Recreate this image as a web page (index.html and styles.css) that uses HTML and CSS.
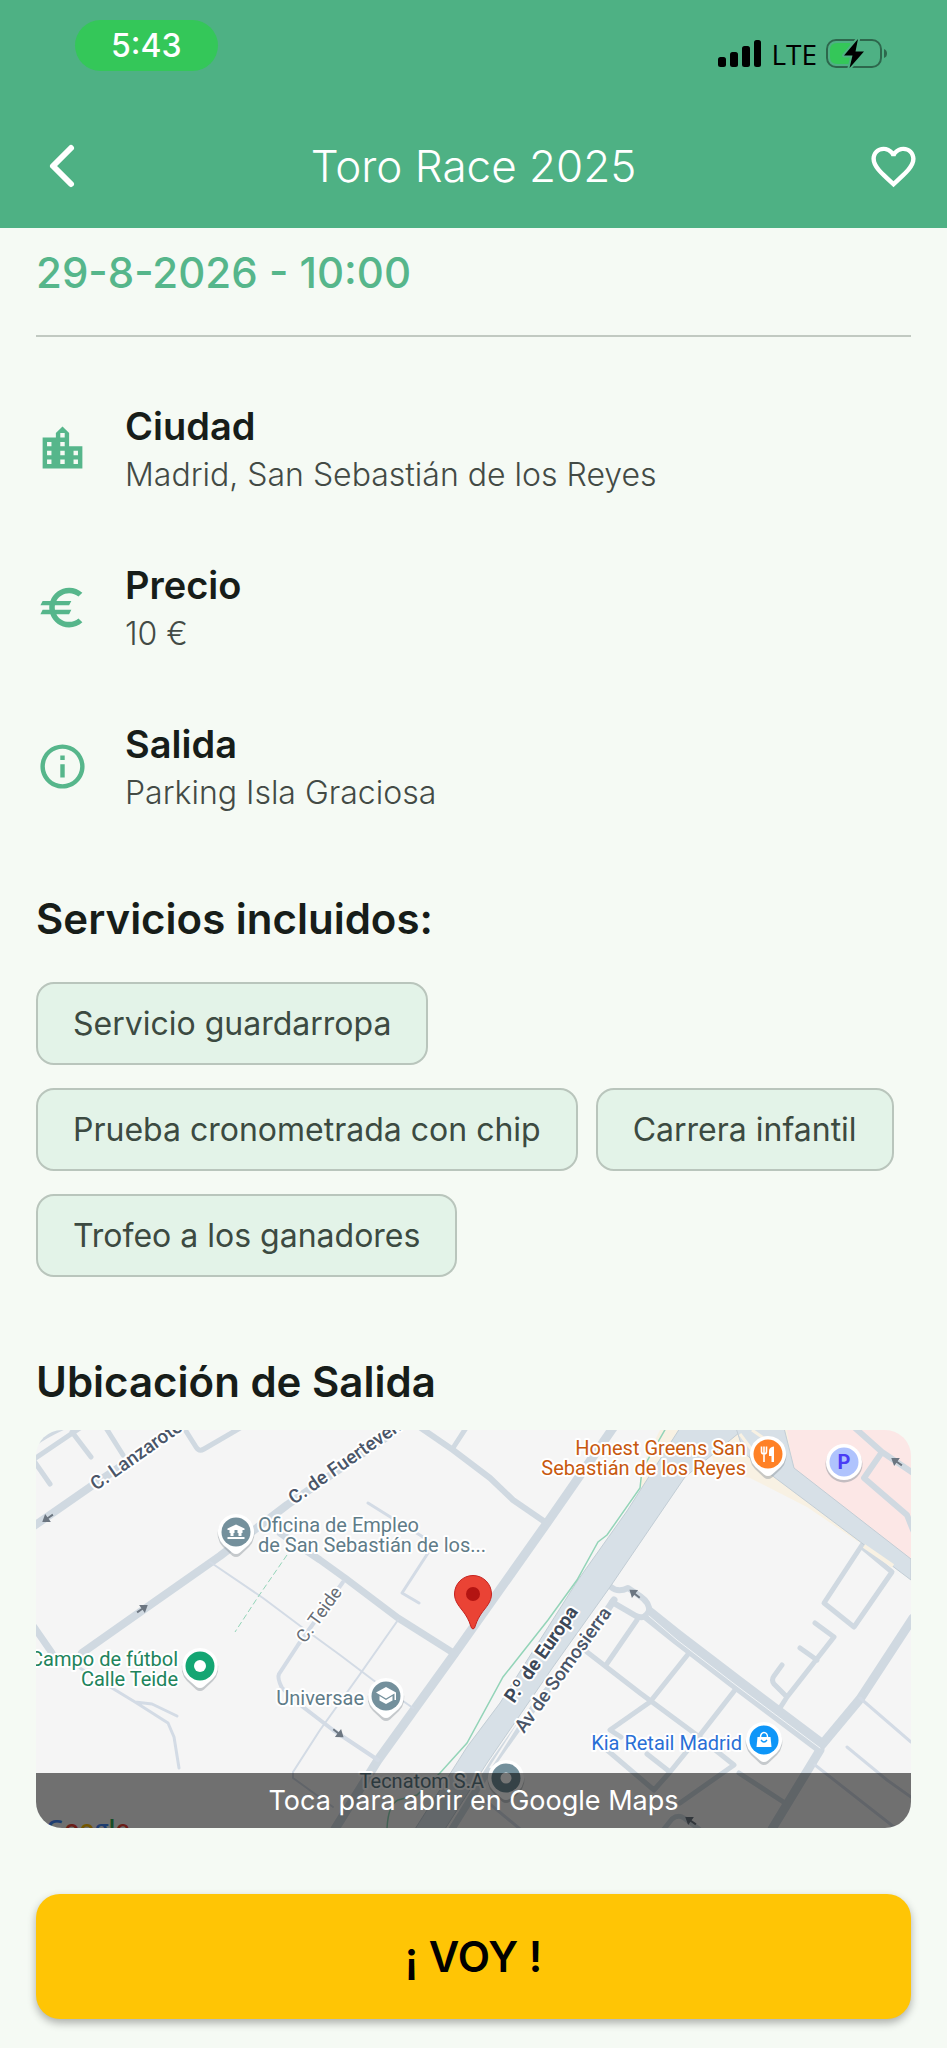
FILE: index.html
```html
<!DOCTYPE html>
<html lang="es">
<head>
<meta charset="utf-8">
<meta name="viewport" content="width=device-width, initial-scale=1">
<title>Toro Race 2025</title>
<link rel="stylesheet" href="styles.css">
</head>
<body>
<header class="top">
  <div class="status">
    <span class="clock">5:43</span>
    <div class="status-icons">
      <svg width="44" height="28" viewBox="0 0 44 28" aria-hidden="true"><rect x="0" y="17" width="8" height="10" rx="2.5"/><rect x="12" y="12" width="8" height="15" rx="2.5"/><rect x="24" y="6" width="8" height="21" rx="2.5"/><rect x="36" y="0" width="7" height="27" rx="2.5"/></svg>
      <span class="network">LTE</span>
      <svg width="62" height="32" viewBox="0 0 62 32" aria-hidden="true">
        <rect x="1" y="2" width="54" height="27" rx="9" fill="none" stroke="#000" stroke-opacity=".42" stroke-width="2"/>
        <path d="M58 11q3 1 3 4.500t-3 4.500z" fill="#000" fill-opacity=".42"/>
        <path d="M11 5h13v21H11q-7 0-7-7v-7q0-7 7-7z" fill="#34c759"/>
        <path d="M32 1L18 17.500h8.500L23.500 30 38 13.500H29.500z" fill="#000" stroke="#4eb184" stroke-width="4" paint-order="stroke" stroke-linejoin="round"/>
      </svg>
    </div>
  </div>
  <nav class="bar">
    <button class="icon-btn" type="button" aria-label="Volver"><svg width="53" height="53" viewBox="0 0 53 53"><path d="M44 8L26 26l18 18" fill="none" stroke="#fff" stroke-width="6" stroke-linecap="round" stroke-linejoin="round"/></svg></button>
    <h1>Toro Race 2025</h1>
    <button class="icon-btn" type="button" aria-label="Favorito"><svg width="53" height="53" viewBox="0 0 24 24" fill="#fff"><path d="M16.500 3c-1.740 0-3.410.810-4.500 2.090C10.910 3.810 9.240 3 7.500 3 4.420 3 2 5.420 2 8.500c0 3.780 3.400 6.860 8.550 11.540L12 21.350l1.450-1.320C18.600 15.360 22 12.280 22 8.500 22 5.420 19.580 3 16.500 3zm-4.400 15.550l-.1.100-.1-.1C7.140 14.240 4 11.390 4 8.500 4 6.500 5.500 5 7.500 5c1.540 0 3.040.990 3.570 2.360h1.870C13.460 5.990 14.960 5 16.500 5c2 0 3.500 1.500 3.500 3.500 0 2.890-3.140 5.740-7.900 10.050z"/></svg></button>
  </nav>
</header>

<main class="content">
  <p class="date">29-8-2026 - 10:00</p>
  <ul class="facts">
    <li class="fact">
      <svg class="fact-icon" viewBox="0 0 24 24" aria-hidden="true"><path d="M15 11V5l-3-3-3 3v2H3v14h18V11h-6zm-8 8H5v-2h2v2zm0-4H5v-2h2v2zm0-4H5V9h2v2zm6 8h-2v-2h2v2zm0-4h-2v-2h2v2zm0-4h-2V9h2v2zm0-4h-2V5h2v2zm6 12h-2v-2h2v2zm0-4h-2v-2h2v2z"/></svg>
      <div><h2>Ciudad</h2><p>Madrid, San Sebastián de los Reyes</p></div>
    </li>
    <li class="fact">
      <svg class="fact-icon" viewBox="0 0 24 24" aria-hidden="true"><path d="M15 18.500c-2.510 0-4.680-1.420-5.760-3.500H15l1-2H8.580c-.05-.33-.08-.66-.08-1s.03-.67.080-1H15l1-2H9.240C10.320 6.920 12.500 5.500 15 5.500c1.610 0 3.090.590 4.230 1.570L21 5.300C19.410 3.870 17.300 3 15 3c-3.920 0-7.240 2.510-8.480 6H3l-1 2h4.060c-.04.330-.06.660-.06 1s.02.670.060 1H3l-1 2h4.520c1.240 3.490 4.560 6 8.480 6 2.310 0 4.410-.870 6-2.300l-1.780-1.770c-1.130.980-2.600 1.570-4.220 1.570z"/></svg>
      <div><h2>Precio</h2><p>10 €</p></div>
    </li>
    <li class="fact">
      <svg class="fact-icon" viewBox="0 0 24 24" aria-hidden="true"><path d="M11 7h2v2h-2zm0 4h2v6h-2zm1-9C6.480 2 2 6.480 2 12s4.480 10 10 10 10-4.480 10-10S17.520 2 12 2zm0 18c-4.410 0-8-3.590-8-8s3.590-8 8-8 8 3.590 8 8-3.590 8-8 8z"/></svg>
      <div><h2>Salida</h2><p>Parking Isla Graciosa</p></div>
    </li>
  </ul>

  <section class="services">
    <h2 class="section-title">Servicios incluidos:</h2>
    <ul class="chips">
      <li>Servicio guardarropa</li>
      <li>Prueba cronometrada con chip</li>
      <li>Carrera infantil</li>
      <li>Trofeo a los ganadores</li>
    </ul>
  </section>

  <section class="place">
    <h2 class="section-title">Ubicación de Salida</h2>
    <a class="map" href="#mapa">
      <svg class="map-art" viewBox="36 1430 875 398" role="img" aria-label="Mapa del punto de salida">
        <defs>
          <g id="pin"><path d="M0-18.500a18.500 18.500 0 0 1 13 31.500L4 21.500q-4 3-8 0L-13 13A18.500 18.500 0 0 1 0-18.500z" fill="#8b949b" opacity=".45" transform="translate(0 2)"/><path d="M0-18a18 18 0 0 1 12.500 31L4 20.500q-4 3-8 0L-12.500 13A18 18 0 0 1 0-18z" fill="#fff"/></g>
          <path id="arrow" d="M-6-1H0V-5L7 0 0 5V1H-6z" fill="#6c7681"/>
        </defs>
        <rect x="36" y="1430" width="875" height="398" fill="#f5f5f5"/>
        <path d="M618 1430H682L640 1490V1470L660 1430zM707 1430H790L794 1468 860 1543 807 1507 750 1478 715 1470z" fill="#f8f1e3"/>
        <path d="M787 1430H911V1560L793 1468z" fill="#fce7e6"/>

        <g fill="none" stroke="#d0d9e1" stroke-linecap="round" stroke-linejoin="round">
          <g stroke-width="9">
            <path d="M613 1428L547 1523 455 1653 378 1760 335 1829"/>
            <path d="M82 1653L153 1603 220 1556 287 1505 400 1428" stroke-width="8"/>
            <path d="M34 1526L93 1485 175 1430" stroke-width="8"/>
            <path d="M913 1618L860 1699 820 1747V1750L772 1829"/>
          </g>
          <g stroke-width="7">
            <path d="M280 1533L320 1560 345 1578 398 1618 455 1654"/>
            <path d="M421 1428L453 1450 490 1478 513 1500 545 1522" stroke-width="6"/>
            <path d="M34 1627L52 1653"/>
            <path d="M452 1829L493 1763 520 1725 587 1640 614 1600"/>
            <path d="M611 1587Q618 1593 628 1588L640 1596Q650 1603 649 1611 645 1620 636 1616L612 1602" stroke-width="6"/>
          </g>
          <g stroke-width="5">
            <path d="M34 1444Q45 1436 62 1428M34 1459L80 1428M72 1432L91 1457M106 1428L123 1455M34 1461L50 1484M184 1428L196 1447Q199 1452 204 1449L240 1428M453 1448L466 1428"/>
            <path d="M855 1428L882 1452 913 1473M882 1452L864 1478 907 1515 913 1530" stroke-width="6"/>
            <path d="M862 1545L824 1603 854 1627 892 1572 862 1547"/>
            <path d="M815 1623L834 1637 787 1697 780 1708M800 1648L817 1660M787 1697L774 1684Q771 1680 774 1676L782 1665"/>
            <path d="M689 1653L650 1702 610 1730 621 1737M587 1652L640 1693 694 1733 734 1765 680 1803M735 1690L700 1735 670 1772 654 1790 607 1750M670 1772L647 1754M606 1665L637 1620"/>
            <path d="M739 1773L785 1803M664 1829L672 1819Q678 1814 684 1818L699 1829"/>
          </g>
          <g stroke-width="3" stroke="#d3dbe5">
            <path d="M80 1668L112 1688 135 1702 168 1723 174 1737 179 1768M135 1702L152 1704 177 1716"/>
            <path d="M343 1582L298 1645 279 1674Q277 1678 282 1688L303 1707 333 1730 378 1760" stroke-width="4"/>
            <path d="M368 1503L392 1518 428 1540 428 1553 402 1593 419 1603"/>
            <path d="M210 1562L263 1598 303 1628 340 1655 373 1680 413 1708" stroke-width="2"/>
            <path d="M398 1620L358 1677 320 1730 293 1772V1778L333 1807" stroke-width="2"/>
            <path d="M860 1698L911 1742M847 1747L887 1780 911 1797M815 1765L894 1827M485 1800L520 1829"/>
          </g>
          <path d="M647 1613L677 1637 737 1683 822 1747" stroke-width="15" stroke-linecap="butt"/>
          <path d="M649 1616L677 1640 737 1686 820 1748" stroke="#f2f5f7" stroke-width="1"/>
        </g>
        <path d="M680 1428L627 1511 578 1580 500 1703 467 1747 415 1829H445L487 1763 553 1667 610 1587 627 1562 685 1477 745 1428z" fill="#d7e0e7" stroke="#c2cdd5"/>
        <path d="M736 1428L744 1453 774 1477 911 1580V1559L794 1468 784 1428z" fill="#d7e0e7" stroke="#c2cdd5"/>
        <path d="M740 1434L752 1450M752 1430L772 1444 784 1446" stroke="#f8f1e3" stroke-width="3" fill="none"/>
        <path d="M864 1546L893 1566" stroke="#f8f1e3" stroke-width="4"/>
        <path d="M666 1428L642 1470 640 1488 607 1535 598 1542 577 1580 548 1620 503 1677 467 1743 440 1773 417 1795 398 1800Q388 1805 387 1829" fill="none" stroke="#93d4b8" stroke-width="1.500"/>
        <path d="M287 1555L258 1597 235 1632" fill="none" stroke="#93d4b8" stroke-dasharray="6 3"/>
        <path d="M490 1768L530 1705" stroke="#f5f5f5" stroke-width="2"/>

        <use href="#arrow" transform="translate(48 1518) rotate(145)"/>
        <use href="#arrow" transform="translate(142 1609) rotate(-35)"/>
        <use href="#arrow" transform="translate(338 1733) rotate(38)"/>
        <use href="#arrow" transform="translate(635 1594) rotate(218)"/>
        <use href="#arrow" transform="translate(897 1462) rotate(215)"/>
        <use href="#arrow" transform="translate(691 1821) rotate(215)"/>

        <g class="street">
          <text transform="translate(96 1491) rotate(-35)">C. Lanzarote</text>
          <text transform="translate(294 1505) rotate(-35)">C. de Fuerteventura</text>
          <text class="minor" transform="translate(305 1644) rotate(-54)">C. Teide</text>
          <text class="major" transform="translate(514 1704) rotate(-55)">P.º de Europa</text>
          <text transform="translate(524 1734) rotate(-54)">Av de Somosierra</text>
        </g>

        <g class="poi">
          <g fill="#5f7c88">
            <text x="258" y="1532">Oficina de Empleo</text>
            <text x="258" y="1552">de San Sebastián de los...</text>
            <text x="364" y="1705" text-anchor="end">Universae</text>
            <text x="484" y="1788" text-anchor="end">Tecnatom S.A</text>
          </g>
          <g fill="#21845c" text-anchor="end">
            <text x="178" y="1666">Campo de fútbol</text>
            <text x="178" y="1686">Calle Teide</text>
          </g>
          <g fill="#c8590f" text-anchor="end">
            <text x="746" y="1455">Honest Greens San</text>
            <text x="746" y="1475">Sebastián de los Reyes</text>
          </g>
          <text x="742" y="1750" text-anchor="end" fill="#2a6fd6">Kia Retail Madrid</text>
        </g>

        <g transform="translate(236 1532)"><use href="#pin"/><circle r="14.500" fill="#74909c"/><path d="M-8.500-3.500L0-7.500 8.500-3.500V-2H-8.500zM-6.500-2h5v3h-1v3h-3V1h-1zM1.500-2h5v3h-1v3h-3V1h-1zM-8.500 5h17v2h-17z" fill="#fff"/></g>
        <g transform="translate(200 1666)"><use href="#pin"/><circle r="14.500" fill="#14a673"/><circle r="6" fill="#fff"/></g>
        <g transform="translate(386 1696)"><use href="#pin"/><circle r="14.500" fill="#74909c"/><path d="M0-9L10-3.500V4H8.500V-2.500L0 2.500-10-3.500zM-6.500 0L0 4 6.500 0V4.500L0 8-6.500 4.500z" fill="#fff"/></g>
        <g transform="translate(506 1778)"><use href="#pin"/><circle r="14.500" fill="#74909c"/><circle r="5.500" fill="#fff"/></g>
        <g transform="translate(764 1740)"><use href="#pin"/><circle r="14.500" fill="#0e96f8"/><path d="M-6.500-3h13l1 10h-15z" fill="#fff"/><path d="M-3.500-3a3.500 4.500 0 0 1 7 0" fill="none" stroke="#fff" stroke-width="1.500"/><path d="M-3 0q3 4 6 0" fill="none" stroke="#0e96f8" stroke-width="1.300"/></g>
        <g transform="translate(768 1454)"><use href="#pin"/><circle r="14.500" fill="#ff8126"/><path d="M-6.500-7.500v5q0 2.500 2.500 2.500t2.500-2.500v-5M-4-7.500V8" fill="none" stroke="#fff" stroke-width="1.600"/><path d="M1 2v-5q0-4 5-4.500V8H3.500V2z" fill="#fff"/></g>
        <g transform="translate(844 1462)"><circle cy="2" r="18.500" fill="#8b949b" opacity=".5"/><circle r="18" fill="#fff"/><circle r="14.500" fill="#afc3fd"/><text class="parking" y="7" text-anchor="middle">P</text></g>
        <g transform="translate(473 1594)"><path d="M0-18.500A18.500 18.500 0 0 1 18.500 0C18.500 8 13 13 8 20 4 26 3 30 1.500 34q-1.500 2-3 0C-3 30-4 26-8 20-13 13-18.500 8-18.500 0A18.500 18.500 0 0 1 0-18.500z" fill="#ea4335" stroke="#c5221f"/><circle r="7" fill="#b31412"/></g>
        <text class="brand" x="46" y="1838"><tspan fill="#4285f4">G</tspan><tspan fill="#ea4335">o</tspan><tspan fill="#fbbc04">o</tspan><tspan fill="#4285f4">g</tspan><tspan fill="#34a853">l</tspan><tspan fill="#ea4335">e</tspan></text>
      </svg>
      <span class="map-hint">Toca para abrir en Google Maps</span>
    </a>
  </section>

  <button class="go" type="button">¡ VOY !</button>
</main>
</body>
</html>
```
FILE: styles.css
```css
* { box-sizing: border-box; }

body {
  margin: 0;
  background: #f5faf4;
  color: #171d19;
  font-family: Inter, "Liberation Sans", sans-serif;
}

h1, h2, p, ul { margin: 0; padding: 0; }
ul { list-style: none; }
button { border: 0; font: inherit; cursor: pointer; }
svg { display: block; }

.top { background: #4eb184; color: #fff; }

.status {
  display: flex;
  justify-content: space-between;
  align-items: flex-start;
  padding: 20px 59px 0 75px;
}

.clock {
  padding: 0 36px;
  border-radius: 26px;
  background: #34c759;
  font-size: 32px;
  font-weight: 500;
  line-height: 51px;
}

.status-icons {
  display: flex;
  align-items: center;
  gap: 9px;
  padding-top: 16px;
  color: #000;
}

.network {
  font-family: "Open Sans", sans-serif;
  font-size: 28px;
  font-weight: 500;
  line-height: 36px;
}

.bar {
  display: flex;
  justify-content: space-between;
  align-items: center;
  padding: 44px 27px 12px;
}

.bar h1 {
  font-size: 44px;
  font-weight: 300;
  line-height: 100px;
}

.icon-btn { padding: 0; background: none; }

.content { padding: 0 36px 28px; }

.date {
  padding: 16px 0 33px;
  border-bottom: 2px solid #c1c9c1;
  color: #56b68b;
  font-size: 42px;
  font-weight: 500;
  line-height: 58px;
}

.facts { padding: 60px 0 73px; }

.fact {
  display: flex;
  align-items: center;
  gap: 36px;
  height: 103px;
  margin-bottom: 56px;
}

.fact:last-child { margin-bottom: 0; }
.fact-icon { width: 53px; height: 53px; fill: #56b68b; }

.fact h2 {
  font-size: 38px;
  font-weight: 600;
  line-height: 52px;
}

.fact p {
  color: #434a45;
  font-size: 32px;
  font-weight: 300;
  line-height: 46px;
}

.section-title {
  font-size: 42px;
  font-weight: 600;
  line-height: 56px;
}

.chips {
  display: flex;
  flex-wrap: wrap;
  gap: 23px 18px;
  padding: 35px 0 77px;
}

.chips li {
  padding: 0 35px;
  border: 2px solid #b9c5bc;
  border-radius: 18px;
  background: #e3f3e8;
  color: #3c4a41;
  font-size: 32px;
  line-height: 79px;
}

.map {
  position: relative;
  display: block;
  overflow: hidden;
  margin: 20px 0 66px;
  border-radius: 26px;
  color: #fff;
  text-decoration: none;
}

.map-art { width: 100%; height: auto; font-family: Roboto, sans-serif; }

.map-hint {
  position: absolute;
  right: 0;
  bottom: 0;
  left: 0;
  background: rgba(0, 0, 0, 0.54);
  font-size: 27px;
  font-weight: 400;
  line-height: 55px;
  text-align: center;
}

.street text, .poi text {
  stroke: #fff;
  stroke-width: 4px;
  stroke-linejoin: round;
  paint-order: stroke;
}

.street text { fill: #4a5568; font-size: 19px; font-weight: 500; }
.street .minor { fill: #666c74; font-size: 18px; font-weight: 400; }
.street .major { fill: #3c4858; font-weight: 700; }
.poi text { font-size: 20px; }
.parking { fill: #4a3df5; font-size: 20px; font-weight: 700; }
.brand { font-family: "Open Sans", sans-serif; font-size: 25px; font-weight: 600; }

.go {
  display: block;
  width: 100%;
  border-radius: 24px;
  background: #ffc505;
  box-shadow: 0 4px 9px rgba(0, 0, 0, 0.3);
  color: #000;
  font-size: 42px;
  font-weight: 600;
  line-height: 123px;
}
```
